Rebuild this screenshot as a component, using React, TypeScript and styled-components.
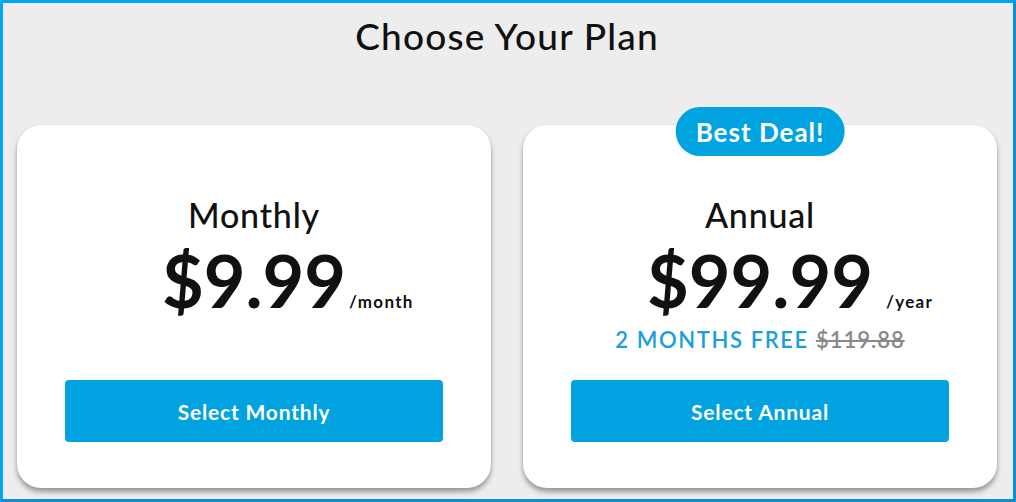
import { FC } from "react";
import styled, { createGlobalStyle } from "styled-components";

const GlobalStyle = createGlobalStyle`
  * {
    box-sizing: border-box;
  }
  body {
    margin: 0;
    font-family: Lato, "Noto Sans", sans-serif;
    color: #111;
  }
`;

const Frame = styled.div`
  width: 1016px;
  height: 502px;
  background-color: #ededed;
  border: 3px solid #00a6f5;
  border-right-color: #0a8fd8;
  border-bottom-color: #0a8fd8;
  padding: 14px 16px 0 14px;
  display: flex;
  flex-direction: column;
  align-items: center;
  overflow: hidden;
`;

const Title = styled.h1`
  margin: 0;
  font-size: 37px;
  line-height: 1;
  font-weight: 500;
  letter-spacing: 1.2px;
`;

const Plans = styled.div`
  margin-top: 71px;
  display: grid;
  grid-template-columns: 474px 474px;
  gap: 32px;
  width: 100%;
`;

const Card = styled.div`
  position: relative;
  background-color: white;
  border-radius: 24px;
  box-shadow: 0 4px 5px rgba(0, 0, 0, 0.35), 0 0 2px rgba(0, 0, 0, 0.08);
  padding: 73px 48px 46px;
  display: flex;
  flex-direction: column;
  align-items: center;
`;

const Badge = styled.div`
  position: absolute;
  top: -18px;
  left: 50%;
  transform: translateX(-50%);
  height: 49px;
  padding: 0 20px;
  border-radius: 25px;
  background-color: #00a3e0;
  color: white;
  font-size: 26px;
  font-weight: 700;
  display: flex;
  align-items: center;
  white-space: nowrap;
  letter-spacing: 1px;
`;

const PlanName = styled.h2`
  margin: 0;
  font-size: 34px;
  line-height: 1;
  font-weight: 500;
  letter-spacing: 0.8px;
`;

const PriceRow = styled.div`
  margin-top: 12px;
  width: 100%;
  display: grid;
  grid-template-columns: 1fr auto 1fr;
  align-items: baseline;
`;

const Price = styled.span`
  grid-column: 2;
  font-size: 72px;
  line-height: 1;
  font-weight: 700;
`;

const Period = styled.span<{ $gap: number }>`
  grid-column: 3;
  margin-left: ${(p) => p.$gap}px;
  font-size: 17px;
  font-weight: 700;
  letter-spacing: 1.3px;
`;

const Savings = styled.div`
  margin-top: 13px;
  font-size: 22px;
  line-height: 1;
  font-weight: 600;
  letter-spacing: 1.6px;
  color: #1a9fdb;
`;

const OldPrice = styled.s`
  color: #8a8a8a;
  letter-spacing: 1px;
`;

const Footer = styled.div`
  margin-top: auto;
  padding-top: 29px;
  width: 100%;
`;

const Button = styled.button`
  display: block;
  width: 100%;
  height: 62px;
  border: none;
  border-radius: 4px;
  background-color: #00a3e0;
  color: white;
  font-family: inherit;
  font-size: 21px;
  font-weight: 700;
  letter-spacing: 0.8px;
  cursor: pointer;
`;

interface Plan {
  name: string;
  price: string;
  period: string;
  gap: number;
  badge?: string;
  savings?: { text: string; old: string };
}

const plans: Plan[] = [
  { name: "Monthly", price: "$9.99", period: "/month", gap: 3 },
  {
    name: "Annual",
    price: "$99.99",
    period: "/year",
    gap: 13,
    badge: "Best Deal!",
    savings: { text: "2 MONTHS FREE", old: "$119.88" },
  },
];

const App: FC = () => {
  return (
    <>
      <GlobalStyle />
      <Frame>
        <Title>Choose Your Plan</Title>
        <Plans>
          {plans.map((plan) => (
            <Card key={plan.name}>
              {plan.badge && <Badge>{plan.badge}</Badge>}
              <PlanName>{plan.name}</PlanName>
              <PriceRow>
                <Price>{plan.price}</Price>
                <Period $gap={plan.gap}>{plan.period}</Period>
              </PriceRow>
              {plan.savings && (
                <Savings>
                  {plan.savings.text} <OldPrice>{plan.savings.old}</OldPrice>
                </Savings>
              )}
              <Footer>
                <Button>Select {plan.name}</Button>
              </Footer>
            </Card>
          ))}
        </Plans>
      </Frame>
    </>
  );
};

export default App;
